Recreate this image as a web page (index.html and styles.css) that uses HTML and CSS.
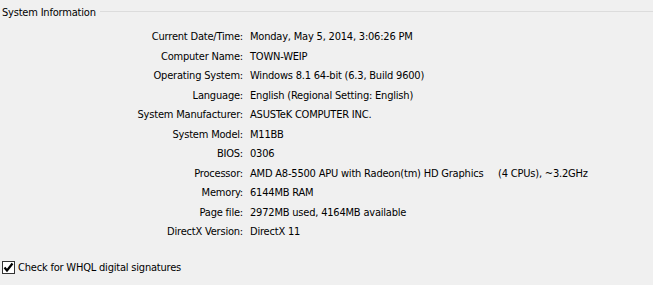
FILE: index.html
```html
<!DOCTYPE html>
<html>
<head>
<meta charset="utf-8">
<link rel="stylesheet" href="styles.css">
</head>
<body>
<div class="panel">
  <div class="group-head">
    <span class="group-title">System Information</span>
    <span class="group-line"></span>
  </div>
  <div class="info">
    <div class="lbl">Current Date/Time:</div><div class="val">Monday, May 5, 2014, 3:06:26 PM</div>
    <div class="lbl">Computer Name:</div><div class="val">TOWN-WEIP</div>
    <div class="lbl">Operating System:</div><div class="val">Windows 8.1 64-bit (6.3, Build 9600)</div>
    <div class="lbl">Language:</div><div class="val">English (Regional Setting: English)</div>
    <div class="lbl">System Manufacturer:</div><div class="val">ASUSTeK COMPUTER INC.</div>
    <div class="lbl">System Model:</div><div class="val">M11BB</div>
    <div class="lbl">BIOS:</div><div class="val">0306</div>
    <div class="lbl">Processor:</div><div class="val">AMD A8-5500 APU with Radeon(tm) HD Graphics     (4 CPUs), ~3.2GHz</div>
    <div class="lbl">Memory:</div><div class="val">6144MB RAM</div>
    <div class="lbl">Page file:</div><div class="val">2972MB used, 4164MB available</div>
    <div class="lbl">DirectX Version:</div><div class="val">DirectX 11</div>
  </div>
  <label class="check">
    <span class="box"><svg width="11" height="11" viewBox="0 0 11 11"><path d="M1.5 5.5 L4 8.5 L9.5 1.5" fill="none" stroke="#000" stroke-width="2.2"/></svg></span>
    <span class="check-text">Check for WHQL digital signatures</span>
  </label>
</div>
</body>
</html>
```
FILE: styles.css
```css
html, body {
  margin: 0;
  padding: 0;
  background: #f0f0f0;
}
body {
  font-family: "DejaVu Sans Condensed", "Liberation Sans", sans-serif;
  font-size: 11px;
  letter-spacing: -0.2px;
  color: #000;
  width: 653px;
  height: 285px;
  overflow: hidden;
}
.panel {
  display: flex;
  flex-direction: column;
}
.group-head {
  display: flex;
  align-items: center;
  height: 13px;
  margin-top: 5px;
}
.group-title {
  padding-left: 2px;
  line-height: 13px;
  padding-right: 4px;
  position: relative;
  top: 1px;
}
.group-line {
  flex: 1;
  border-top: 1px solid #dcdcdc;
}
.info {
  display: grid;
  grid-template-columns: 243px auto;
  column-gap: 7px;
  grid-auto-rows: 19.5px;
  align-items: center;
  margin-top: 9px;
}
.lbl {
  text-align: right;
  white-space: nowrap;
}
.val {
  white-space: pre;
}
.check {
  display: flex;
  align-items: center;
  margin-top: 19px;
  margin-left: 2px;
}
.box {
  width: 11px;
  height: 11px;
  border: 1px solid #333;
  background: #fff;
  display: flex;
}
.check-text {
  margin-left: 3px;
}
```
